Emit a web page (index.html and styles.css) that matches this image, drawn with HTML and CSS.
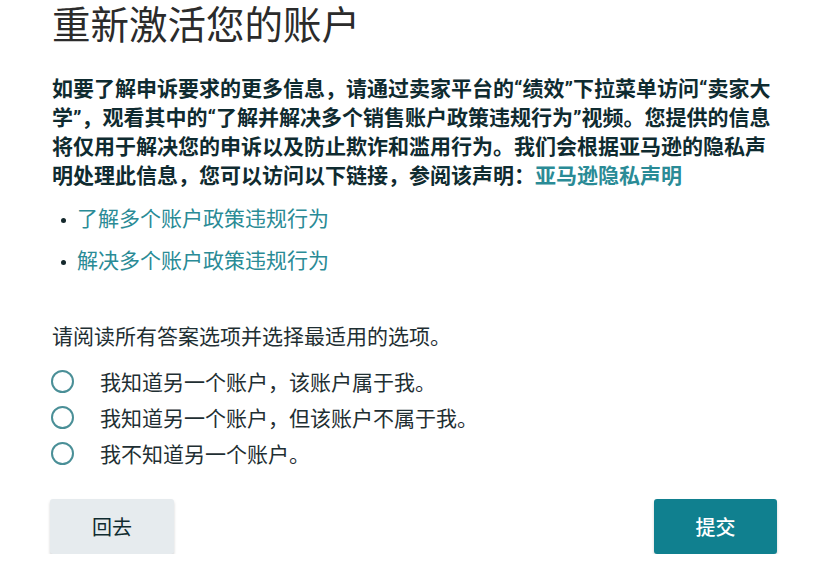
FILE: index.html
```html
<!DOCTYPE html>
<html lang="zh-CN">
<head>
<meta charset="utf-8">
<title>重新激活您的账户</title>
<link rel="stylesheet" href="styles.css">
</head>
<body>
<main class="page">
  <h1 class="title">重新激活您的账户</h1>
  <p class="intro">如要了解申诉要求的更多信息，请通过卖家平台的“绩效”下拉菜单访问“卖家大学”，观看其中的“了解并解决多个销售账户政策违规行为”视频。您提供的信息将仅用于解决您的申诉以及防止欺诈和滥用行为。我们会根据亚马逊的隐私声明处理此信息，您可以访问以下链接，参阅该声明：<a class="link" href="#">亚马逊隐私声明</a></p>
  <ul class="links">
    <li class="links-item"><a class="link" href="#">了解多个账户政策违规行为</a></li>
    <li class="links-item"><a class="link" href="#">解决多个账户政策违规行为</a></li>
  </ul>
  <p class="prompt">请阅读所有答案选项并选择最适用的选项。</p>
  <div class="options">
    <label class="option"><span class="radio"></span><span class="option-text">我知道另一个账户，该账户属于我。</span></label>
    <label class="option"><span class="radio"></span><span class="option-text">我知道另一个账户，但该账户不属于我。</span></label>
    <label class="option"><span class="radio"></span><span class="option-text">我不知道另一个账户。</span></label>
  </div>
  <div class="actions">
    <button class="btn btn-secondary" type="button">回去</button>
    <button class="btn btn-primary" type="button">提交</button>
  </div>
</main>
</body>
</html>
```

FILE: styles.css
```css
html, body {
  margin: 0;
  padding: 0;
  background: #ffffff;
}

body {
  font-family: Roboto, "Noto Sans CJK SC", sans-serif;
  color: #0f2b30;
  text-spacing-trim: space-all;
}

.page {
  width: 825px;
  box-sizing: border-box;
  padding: 0 48px 0 52px;
}

.title {
  margin: 0;
  font-size: 38.5px;
  line-height: 52px;
  font-weight: 400;
  color: #2b2b2b;
}

.intro {
  margin: 23px 0 0;
  font-size: 21px;
  line-height: 29px;
  font-weight: 700;
  color: #0f2b30;
}

.link {
  color: #2a8b96;
  text-decoration: none;
}

.links {
  list-style: none;
  margin: 14px 0 0;
  padding: 0;
}

.links-item {
  position: relative;
  padding-left: 25px;
  font-size: 21px;
  line-height: 29px;
}

.links-item + .links-item {
  margin-top: 13px;
}

.links-item::before {
  content: "";
  position: absolute;
  left: 9px;
  top: 13px;
  width: 5px;
  height: 5px;
  border-radius: 50%;
  background: #14282c;
}

.prompt {
  margin: 47px 0 0;
  font-size: 21px;
  line-height: 29px;
  color: #1f2f33;
}

.options {
  margin-top: 11px;
  display: flex;
  flex-direction: column;
}

.option {
  display: flex;
  align-items: center;
  height: 36px;
  font-size: 21px;
  color: #1f2f33;
}

.radio {
  box-sizing: border-box;
  width: 23px;
  height: 23px;
  margin-left: -1px;
  border: 2px solid #4a8f97;
  border-radius: 50%;
  flex: none;
}

.option-text {
  margin-left: 26px;
}

.actions {
  margin-top: 28px;
  margin-left: -2px;
  display: flex;
  justify-content: space-between;
}

.btn {
  width: 124px;
  height: 55px;
  border: 0;
  border-radius: 3px;
  font-family: Roboto, "Noto Sans CJK SC", sans-serif;
  font-size: 20px;
  cursor: pointer;
}

.btn-secondary {
  background: #e6ebee;
  color: #0f2b30;
  box-shadow: 0 2px 3px rgba(0, 0, 0, 0.18);
}

.btn-primary {
  width: 123px;
  background: #10808f;
  color: #ffffff;
  font-weight: 500;
  box-shadow: 0 2px 3px rgba(0, 0, 0, 0.18);
}
```
